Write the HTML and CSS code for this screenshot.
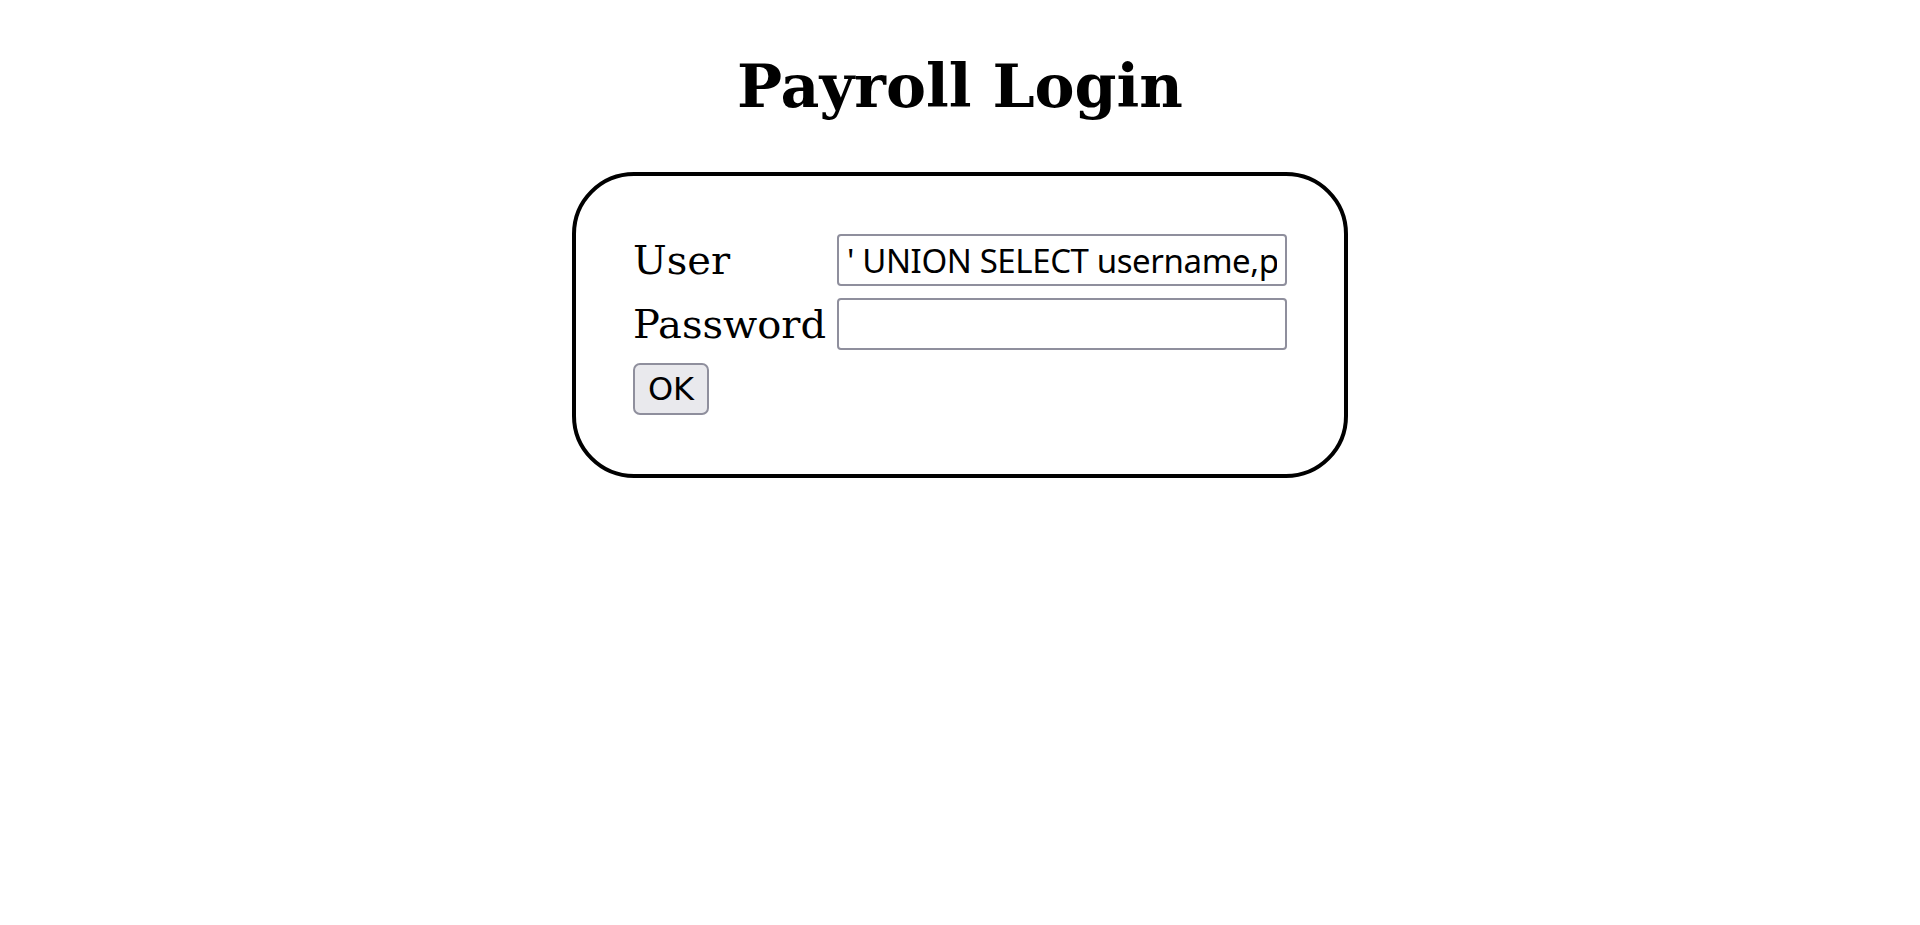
FILE: index.html
```html
<!DOCTYPE html>
<html lang="en">
<head>
<meta charset="utf-8">
<title>Payroll Login</title>
<link rel="stylesheet" href="styles.css">
</head>
<body>
<h1 class="title">Payroll Login</h1>
<form class="login-box">
  <label class="field-label" for="user">User</label>
  <input class="field-input field-input--text" id="user" type="text" value="' UNION SELECT username,password FROM users--">
  <label class="field-label" for="pass">Password</label>
  <input class="field-input" id="pass" type="password">
  <div class="actions">
    <button class="ok-button" type="button">OK</button>
  </div>
</form>
</body>
</html>
```

FILE: styles.css
```css
html, body {
  margin: 0;
  padding: 0;
  background: #ffffff;
  color: #000000;
}

body {
  font-family: "DejaVu Serif", serif;
  display: flex;
  flex-direction: column;
  align-items: center;
}

.title {
  font-family: "DejaVu Serif", serif;
  font-weight: bold;
  font-size: 60px;
  line-height: normal;
  margin: 51px 0 51px;
  text-align: center;
}

.login-box {
  box-sizing: border-box;
  width: 776px;
  border: 4px solid #000000;
  border-radius: 62px;
  padding: 58px 57px 59px;
  display: grid;
  grid-template-columns: 190px 450px;
  column-gap: 14px;
  row-gap: 12px;
  align-items: center;
}

.field-label {
  font-family: "DejaVu Serif", serif;
  font-size: 40px;
  line-height: normal;
}

.field-input {
  box-sizing: border-box;
  width: 450px;
  height: 52px;
  margin: 0;
  border: 2px solid #8f8f9d;
  border-radius: 4px;
  padding: 0 8px 0 8px;
  background: #ffffff;
  color: #000000;
  font-family: "Noto Sans", sans-serif;
  font-size: 33px;
  letter-spacing: -0.4px;
  outline: none;
}

.actions {
  grid-column: 1 / -1;
  display: flex;
  padding-top: 1px;
}

.ok-button {
  box-sizing: border-box;
  height: 52px;
  width: 76px;
  margin: 0;
  padding: 0;
  border: 2px solid #8f8f9d;
  border-radius: 7px;
  background: #e9e9ed;
  color: #000000;
  font-family: "DejaVu Sans", sans-serif;
  font-size: 32px;
  line-height: 1;
}
```
